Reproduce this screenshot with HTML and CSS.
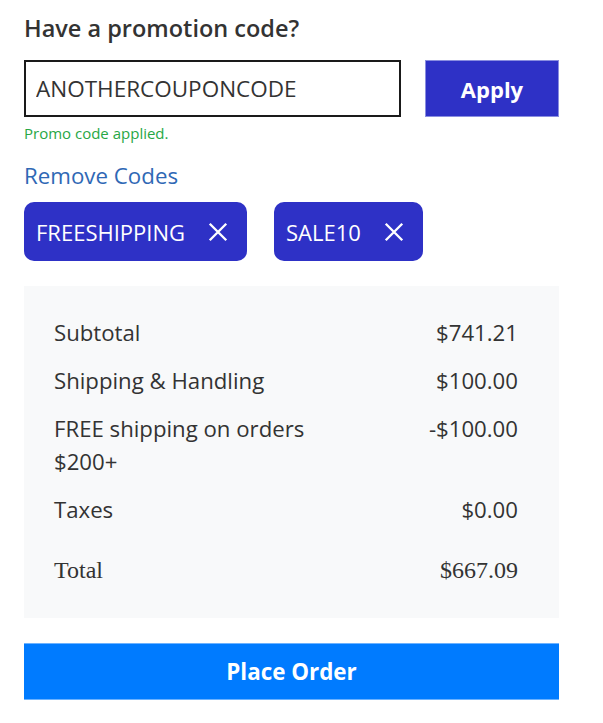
FILE: index.html
```html
<!DOCTYPE html>
<html lang="en">
<head>
    <meta charset="UTF-8">
    <meta name="viewport" content="width=device-width, initial-scale=1.0">
    <title>Checkout - Promotion</title>
    <link rel="stylesheet" href="styles.css">
</head>
<body>
    <div class="container">
        <h2 class="promo-title">Have a promotion code?</h2>

        <div class="promo-form">
            <input type="text" class="promo-input" value="ANOTHERCOUPONCODE">
            <button class="apply-btn">Apply</button>
        </div>
        <p class="promo-msg">Promo code applied.</p>

        <a href="#" class="remove-link">Remove Codes</a>

        <div class="chips">
            <span class="chip">FREESHIPPING
                <svg class="chip-x" viewBox="0 0 24 24"><path d="M3 3 L21 21 M21 3 L3 21"/></svg>
            </span>
            <span class="chip">SALE10
                <svg class="chip-x" viewBox="0 0 24 24"><path d="M3 3 L21 21 M21 3 L3 21"/></svg>
            </span>
        </div>

        <div class="summary">
            <div class="summary-row">
                <span class="label">Subtotal</span>
                <span class="value">$741.21</span>
            </div>
            <div class="summary-row">
                <span class="label">Shipping &amp; Handling</span>
                <span class="value">$100.00</span>
            </div>
            <div class="summary-row">
                <span class="label">FREE shipping on orders $200+</span>
                <span class="value">-$100.00</span>
            </div>
            <div class="summary-row">
                <span class="label">Taxes</span>
                <span class="value">$0.00</span>
            </div>
            <div class="summary-row total-row">
                <span class="label">Total</span>
                <span class="value">$667.09</span>
            </div>
        </div>

        <button class="place-btn">Place Order</button>
    </div>
</body>
</html>
```

FILE: styles.css
```css
* { margin: 0; padding: 0; box-sizing: border-box; }
body { font-family: "Open Sans", "Noto Sans", sans-serif; background: #fff; color: #333; }
.container { width: 583px; padding: 12px 24px 20px 24px; }
.promo-title { font-size: 23.5px; font-weight: 600; line-height: 32px; color: #333; margin-bottom: 16px; }
.promo-form { display: flex; gap: 24px; }
.promo-input { width: 377px; height: 57px; border: 2px solid #1a1a1a; padding: 0 10px; font-family: "Open Sans", sans-serif; font-size: 22.5px; font-weight: 400; color: #333; background: #fff; outline: none; }
.apply-btn { width: 134px; height: 57px; background: #2e31c6; border: 1px solid #8a8ee0; color: #fff; font-family: "Open Sans", sans-serif; font-size: 22px; font-weight: 700; cursor: pointer; }
.promo-msg { font-size: 15px; line-height: 20px; color: #28a745; margin-top: 6px; }
.remove-link { display: inline-block; margin-top: 18px; font-size: 22.3px; line-height: 30px; color: #2f68b5; text-decoration: none; }
.chips { display: flex; gap: 27px; margin-top: 11px; }
.chip { display: inline-flex; align-items: center; height: 59px; padding: 0 18px 0 12px; background: #2e31c6; color: #fff; font-size: 22px; border-radius: 10px; gap: 22px; }
.chip-x { width: 22px; height: 22px; stroke: #fff; stroke-width: 2.6; fill: none; }
.summary { background: #f8f9fa; margin-top: 25px; padding: 30px 41px 31px 30px; }
.summary-row { display: flex; justify-content: space-between; font-size: 22.2px; line-height: 33px; color: #333; margin-bottom: 15px; }
.summary-row .label { max-width: 290px; }
.summary-row .value { text-align: right; }
.total-row { margin-top: 28px; margin-bottom: 0; font-family: "Liberation Serif", serif; font-size: 24px; }
.place-btn { display: block; width: 535px; height: 57px; margin-top: 25px; background: #007bff; border: none; border-top: 1px solid #6cb2ff; border-bottom: 1px solid #6cb2ff; color: #fff; font-family: "Open Sans", sans-serif; font-size: 22.4px; font-weight: 700; cursor: pointer; }
```
